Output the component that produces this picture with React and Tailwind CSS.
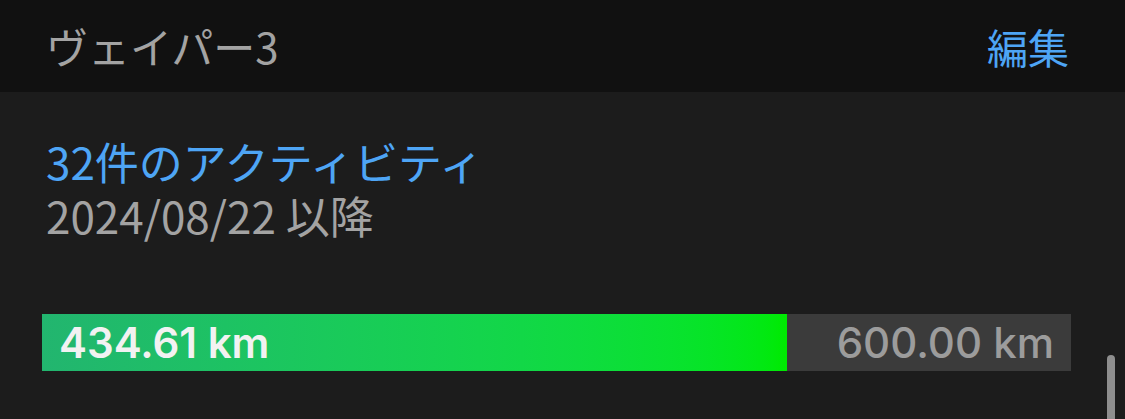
export default function App() {
  const used = 434.61
  const total = 600
  const pct = (used / total) * 100

  return (
    <div
      className="w-[1125px] h-[419px] overflow-hidden bg-[#1c1c1c] relative"
      style={{ fontFamily: '"Noto Sans CJK JP", "Noto Sans", sans-serif' }}
    >
      {/* Header */}
      <div className="h-[92px] bg-[#111111] flex items-center justify-between pl-[46px] pr-[56px]">
        <span className="text-[42px] text-[#a3a3a3] leading-none">ヴェイパー3</span>
        <span className="text-[41px] text-[#4ea5f5] leading-none">編集</span>
      </div>

      {/* Activity summary */}
      <div className="pl-[46px] pt-[42px] flex flex-col">
        <span className="text-[44px] leading-[54px] text-[#4ea5f5]">32件のアクティビティ</span>
        <span className="text-[44px] leading-[54px] text-[#a3a3a3]">2024/08/22 以降</span>
      </div>

      {/* Distance bar */}
      <div className="absolute left-[42px] top-[314px] w-[1029px] h-[57px] bg-[#3b3b3b] flex items-center">
        <div
          className="h-full bg-gradient-to-r from-[#22b56f] to-[#00ea00]"
          style={{ width: `${pct}%` }}
        />
        <span
          className="absolute left-[17px] text-[42px] font-semibold text-[#f2f2f2] leading-none"
          style={{ fontFamily: 'Inter, "Noto Sans", sans-serif' }}
        >
          434.61 km
        </span>
        <span
          className="absolute right-[17px] text-[42px] font-medium text-[#9c9c9c] leading-none"
          style={{ fontFamily: 'Inter, "Noto Sans", sans-serif' }}
        >
          600.00 km
        </span>
      </div>

      {/* Scroll indicator */}
      <div className="absolute left-[1107px] top-[355px] w-[8px] h-[80px] rounded-full bg-[#8e8e8e]" />
    </div>
  )
}
